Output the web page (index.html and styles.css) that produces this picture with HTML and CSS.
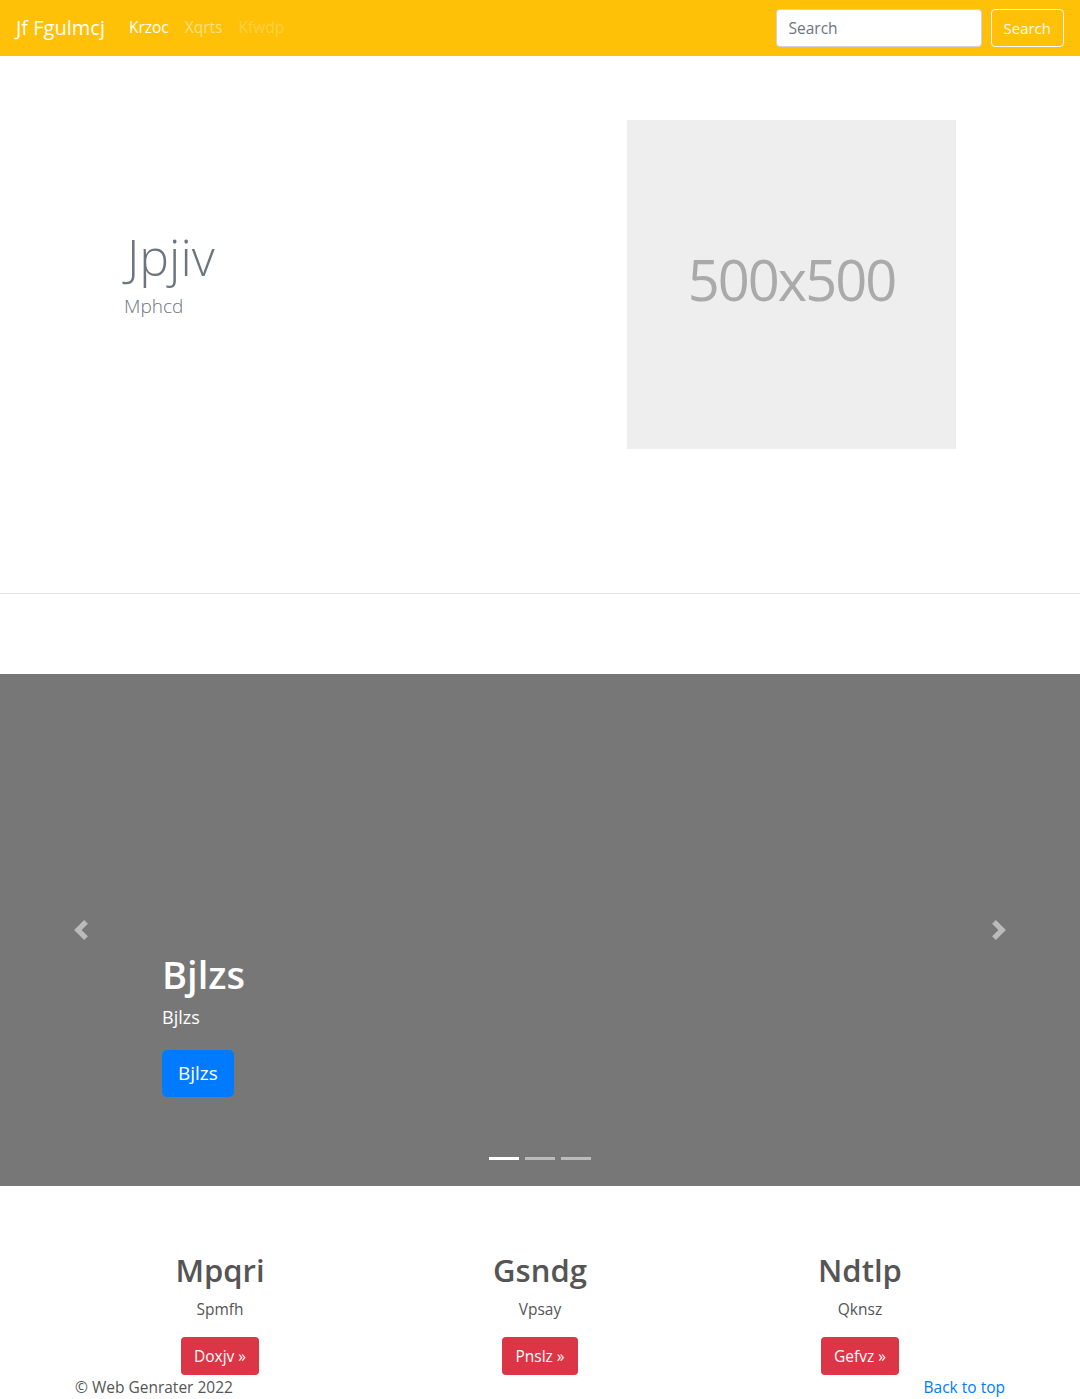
FILE: index.html
```html
<!DOCTYPE html>
<html lang="en">
<head>
<meta charset="utf-8">
<title>Jf Fgulmcj</title>
<link rel="stylesheet" href="styles.css">
</head>
<body>
<nav class="navbar">
  <a class="brand" href="#">Jf Fgulmcj</a>
  <ul class="nav-links">
    <li><a class="nav-link active" href="#">Krzoc</a></li>
    <li><a class="nav-link" href="#">Xqrts</a></li>
    <li><a class="nav-link disabled" href="#">Kfwdp</a></li>
  </ul>
  <form class="search-form">
    <input class="search-input" type="text" placeholder="Search">
    <button class="btn-outline-light" type="button">Search</button>
  </form>
</nav>

<section class="hero">
  <div class="hero-text">
    <h1 class="hero-title">Jpjiv</h1>
    <p class="hero-lead">Mphcd</p>
  </div>
  <div class="placeholder">500x500</div>
</section>

<section class="carousel">
  <a class="carousel-control" href="#"><svg width="20" height="20" viewBox="0 0 8 8"><path fill="#fff" d="M5.25 0l-4 4 4 4 1.5-1.5L4.25 4l2.5-2.5L5.25 0z"/></svg></a>
  <div class="carousel-caption">
    <h1 class="caption-title">Bjlzs</h1>
    <p class="caption-text">Bjlzs</p>
    <a class="btn-primary-lg" href="#">Bjlzs</a>
  </div>
  <a class="carousel-control" href="#"><svg width="20" height="20" viewBox="0 0 8 8"><path fill="#fff" d="M2.75 0l-1.5 1.5L3.75 4l-2.5 2.5L2.75 8l4-4-4-4z"/></svg></a>
  <ol class="indicators">
    <li class="indicator active"></li>
    <li class="indicator"></li>
    <li class="indicator"></li>
  </ol>
</section>

<section class="features">
  <div class="feature">
    <h2 class="feature-title">Mpqri</h2>
    <p class="feature-text">Spmfh</p>
    <a class="btn-danger" href="#">Doxjv &raquo;</a>
  </div>
  <div class="feature">
    <h2 class="feature-title">Gsndg</h2>
    <p class="feature-text">Vpsay</p>
    <a class="btn-danger" href="#">Pnslz &raquo;</a>
  </div>
  <div class="feature">
    <h2 class="feature-title">Ndtlp</h2>
    <p class="feature-text">Qknsz</p>
    <a class="btn-danger" href="#">Gefvz &raquo;</a>
  </div>
</section>

<footer class="footer">
  <p class="copyright">&copy; Web Genrater 2022</p>
  <a class="back-top" href="#">Back to top</a>
</footer>
</body>
</html>
```

FILE: styles.css
```css
* { box-sizing: border-box; }
html, body { margin: 0; padding: 0; }
body {
  font-family: "Open Sans", "Noto Sans", sans-serif;
  font-size: 16px;
  line-height: 1.5;
  color: #555;
  background: #fff;
  width: 1080px;
  height: 1399px;
  overflow: hidden;
}
a { text-decoration: none; }

.navbar {
  height: 56px;
  background: #ffc107;
  display: flex;
  align-items: center;
  padding: 0 16px;
}
.brand {
  color: #fff;
  font-size: 20px;
  line-height: 30px;
  margin-right: 16px;
}
.nav-links {
  display: flex;
  list-style: none;
  margin: 0;
  padding: 0;
}
.nav-link {
  display: block;
  padding: 8px;
  color: rgba(255,255,255,.5);
  font-size: 15.5px;
}
.nav-link.active { color: #fff; }
.nav-link.disabled { color: rgba(255,255,255,.25); }
.search-form {
  margin-left: auto;
  display: flex;
  align-items: center;
}
.search-input {
  width: 206px;
  height: 38px;
  padding: 6px 12px;
  font-family: inherit;
  font-size: 15.5px;
  border: 1px solid #ced4da;
  border-radius: 4px;
  color: #495057;
  background: #fff;
  margin-right: 9px;
}
.search-input::placeholder { color: #6c757d; }
.btn-outline-light {
  height: 38px;
  padding: 6px 12px;
  font-family: inherit;
  font-size: 15px;
  color: #f8f9fa;
  background: transparent;
  border: 1px solid #f8f9fa;
  border-radius: 4px;
}

.hero {
  display: flex;
  align-items: center;
  padding: 64px 124px 144px;
  border-bottom: 1px solid #e5e5e5;
  height: 538px;
  margin-bottom: 80px;
}
.hero-text {
  flex: 1;
  padding-left: 3px;
  margin-bottom: 20px;
}
.hero-title {
  margin: 0;
  font-size: 50px;
  font-weight: 300;
  line-height: 1;
  color: #6c757d;
}
.hero-lead {
  margin: 12px 0 0 -3px;
  font-size: 19px;
  font-weight: 300;
  line-height: 24px;
  color: #6c757d;
}
.placeholder {
  width: 329px;
  height: 329px;
  background: #eee;
  color: #aaa;
  display: flex;
  align-items: center;
  justify-content: center;
  font-size: 56px;
  letter-spacing: -2px;
  padding-bottom: 12px;
}

.carousel {
  position: relative;
  height: 512px;
  background: #777;
  display: flex;
  align-items: stretch;
}
.carousel-control {
  width: 162px;
  flex: none;
  display: flex;
  align-items: center;
  justify-content: center;
  opacity: .5;
}
.carousel-control svg { display: block; }
.carousel-caption {
  flex: 1;
  display: flex;
  flex-direction: column;
  justify-content: flex-end;
  align-items: flex-start;
  padding-bottom: 89px;
  color: #fff;
}
.caption-title {
  margin: 0 0 6px;
  font-size: 38px;
  font-weight: 600;
  line-height: 1.2;
}
.caption-text {
  margin: 0 0 19px;
  font-size: 18px;
  line-height: 1.5;
}
.btn-primary-lg {
  display: inline-block;
  background: #007bff;
  color: #fff;
  font-size: 19px;
  line-height: 29px;
  padding: 9px 16px;
  border-radius: 5px;
}
.indicators {
  position: absolute;
  left: 0;
  right: 0;
  bottom: 26px;
  display: flex;
  justify-content: center;
  list-style: none;
  margin: 0;
  padding: 0;
}
.indicator {
  width: 30px;
  height: 3px;
  margin: 0 3px;
  background: rgba(255,255,255,.5);
}
.indicator.active { background: #fff; }

.features {
  display: flex;
  padding: 66px 60px 0;
}
.feature {
  flex: 1;
  text-align: center;
  padding: 0 15px;
}
.feature-title {
  margin: 0 0 8px;
  font-size: 31px;
  font-weight: 600;
  line-height: 1.2;
  color: #555;
}
.feature-text {
  margin: 0 0 16px;
  font-size: 15.5px;
  line-height: 24px;
}
.btn-danger {
  display: inline-block;
  background: #dc3545;
  color: #fff;
  font-size: 15.5px;
  line-height: 24px;
  padding: 7px 13px;
  border-radius: 4px;
}

.footer {
  display: flex;
  justify-content: space-between;
  padding: 0 75px;
  line-height: 24px;
}
.copyright {
  margin: 0;
  font-size: 15.5px;
  color: #555;
}
.back-top {
  color: #007bff;
  font-size: 15.5px;
}
```
